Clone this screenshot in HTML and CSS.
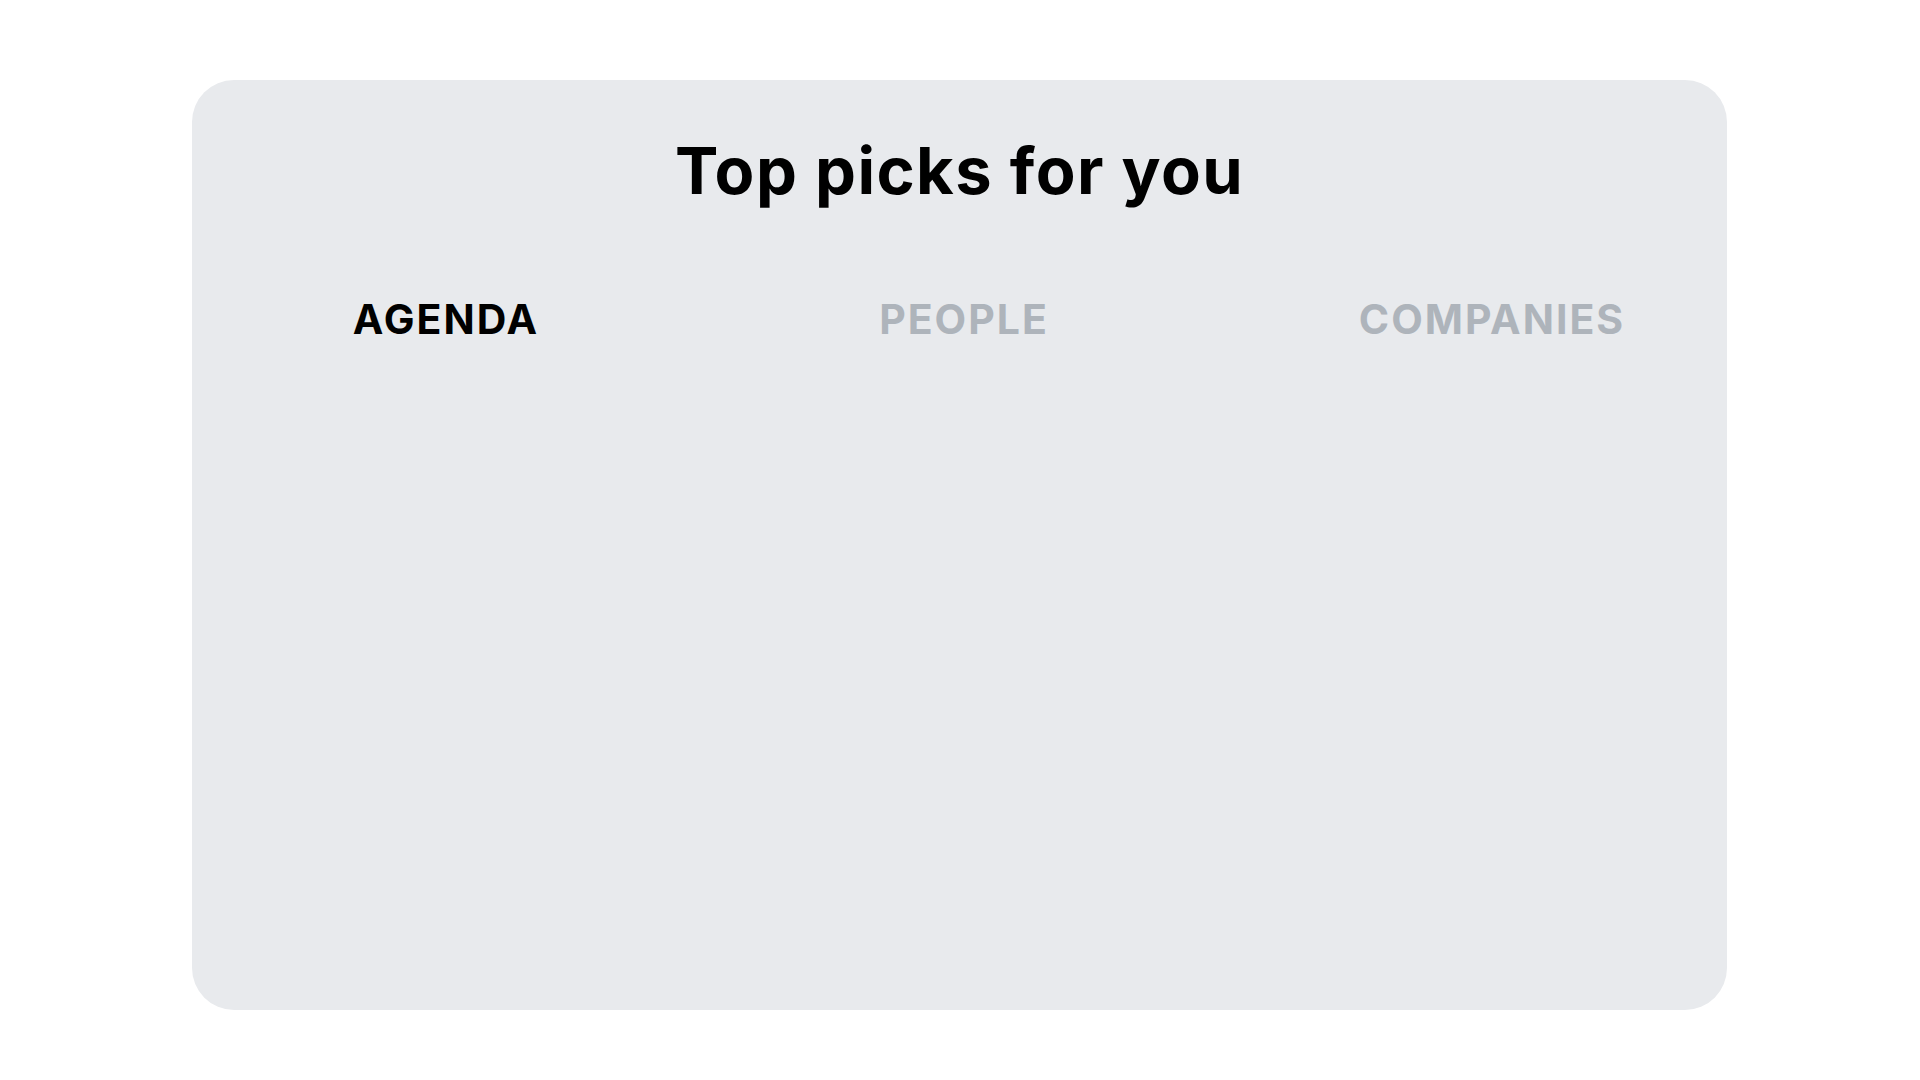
FILE: index.html
```html
<!DOCTYPE html>
<html lang="en">
<head>
<meta charset="utf-8">
<title>Top picks for you</title>
<link rel="stylesheet" href="styles.css">
</head>
<body>
<main class="page">
  <section class="card">
    <h1 class="title">Top picks for you</h1>
    <nav class="tabs">
      <span class="tab tab-active">AGENDA</span>
      <span class="tab">PEOPLE</span>
      <span class="tab">COMPANIES</span>
    </nav>
  </section>
</main>
</body>
</html>
```
FILE: styles.css
```css
html, body {
  margin: 0;
  padding: 0;
  background: #ffffff;
}

.page {
  padding: 80px 193px 70px 192px;
}

.card {
  height: 930px;
  box-sizing: border-box;
  background: #e8eaed;
  border-radius: 42px;
  padding-top: 58px;
  display: flex;
  flex-direction: column;
}

.title {
  margin: 0;
  text-align: center;
  font-family: "Inter", "Liberation Sans", sans-serif;
  font-weight: 700;
  font-size: 65px;
  line-height: 65px;
  color: #000000;
  letter-spacing: 1.4px;
}

.tabs {
  display: grid;
  grid-template-columns: 400px 390px 420px;
  column-gap: 123px;
  padding: 0 25px 0 54px;
  margin-top: 96px;
}

.tab {
  text-align: center;
  font-family: "Inter", "Liberation Sans", sans-serif;
  font-weight: 700;
  font-size: 41px;
  line-height: 41px;
  letter-spacing: 2px;
  color: #aeb4bb;
}

.tab-active {
  color: #000000;
}
```
